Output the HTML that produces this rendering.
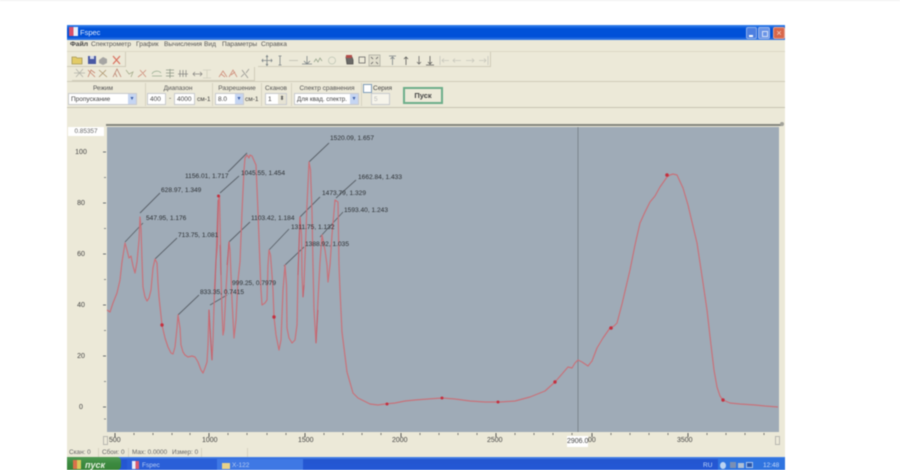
<!DOCTYPE html>
<html><head><meta charset="utf-8"><style>
html,body{margin:0;padding:0;background:#fff;width:900px;height:470px;overflow:hidden}
#root{position:relative;width:900px;height:470px;overflow:hidden;filter:blur(.6px);font-family:"Liberation Sans","Noto Sans CJK JP",sans-serif;color:#444;font-size:6.5px}
.a{position:absolute;white-space:nowrap}
.box{position:absolute;background:#fff;border:1px solid #c8cace;box-sizing:border-box;font-size:6.5px;line-height:10px;padding-left:2px;white-space:nowrap}
.dd{position:absolute;right:0;top:0;bottom:0;width:8px;background:#c5d5f2;color:#3a5ea8;font-size:6px;line-height:10px;text-align:center}
.sep{position:absolute;background:#d6d2c0;width:1px}
.lb{position:absolute;white-space:nowrap;font-size:6.5px;color:#555;transform:translateX(-50%)}
.ann{position:absolute;white-space:nowrap;font-size:6.6px;color:#2c3034}
.yl{position:absolute;left:70px;width:22px;text-align:center;font-size:7px;color:#444}
.xl{position:absolute;top:437px;font-size:7px;color:#444;white-space:nowrap}
.m{position:absolute;top:41px;font-size:6.6px;color:#555;white-space:nowrap}
.st{position:absolute;top:449px;font-size:6.4px;color:#666;white-space:nowrap}
</style></head><body><div id="root">
<div class="a" style="left:0;top:0;width:900px;height:1px;background:#f0f0f0"></div>
<!-- window -->
<div class="a" style="left:67px;top:25px;width:718px;height:433px;background:#ece9d8"></div>
<div class="a" style="left:67px;top:25px;width:718px;height:15px;background:linear-gradient(#3a84ec,#0052d8 25%,#0050d8 78%,#3d80e6)"></div>
<div class="a" style="left:69px;top:27px;width:9px;height:9px;background:linear-gradient(90deg,#d8506a 50%,#e8eef8 50%)"></div>
<div class="a" style="left:80px;top:28px;color:#dfe9fb;font-size:7.5px">Fspec</div>
<div class="a" style="left:746px;top:27px;width:11px;height:12px;background:#4d7fe0;border:1px solid #8fb0ea;box-sizing:border-box;border-radius:2px"><div style="position:absolute;left:2px;bottom:1px;width:4px;height:2px;background:#fff"></div></div>
<div class="a" style="left:758px;top:27px;width:12px;height:12px;background:#6a94e6;border:1px solid #9db7ea;box-sizing:border-box;border-radius:2px"><div style="position:absolute;left:3px;top:3px;width:4px;height:4px;border:1px solid #d6e2f8"></div></div>
<div class="a" style="left:773px;top:27px;width:12px;height:12px;background:#d9674a;border:1px solid #e4a090;box-sizing:border-box;border-radius:2px;color:#f4d4c8;font-size:9px;line-height:10px;text-align:center">×</div>
<!-- menu -->
<div class="a" style="left:70px;top:41px;font-size:6.8px;color:#444;font-weight:bold">Файл</div>
<div class="m" style="left:91px">Спектрометр</div>
<div class="m" style="left:136px">График</div>
<div class="m" style="left:164px">Вычисления</div>
<div class="m" style="left:204px">Вид</div>
<div class="m" style="left:222px">Параметры</div>
<div class="m" style="left:261px">Справка</div>
<div class="a" style="left:67px;top:51px;width:718px;height:1px;background:#dcd8c6"></div>
<!-- toolbars -->
<div class="a" style="left:67px;top:52px;width:58px;height:14px;border-right:1px solid #d0ccba;border-bottom:1px solid #d0ccba"></div>
<div class="a" style="left:258px;top:52px;width:232px;height:14px;border-right:1px solid #d0ccba;border-bottom:1px solid #d0ccba"></div>
<div class="a" style="left:72px;top:67px;width:182px;height:13px;border-right:1px solid #d0ccba;border-bottom:1px solid #d0ccba"></div>
<svg class="a" style="left:67px;top:52px;opacity:.85" width="430" height="30" viewBox="0 0 430 30" fill="none">
<path d="M5 5h4l1 1h5v6H5z" fill="#e2c654" stroke="#9a8a40" stroke-width=".8"/>
<rect x="21" y="4" width="8" height="8" fill="#2c3f9c"/><rect x="23" y="4" width="4" height="3" fill="#cfd6ee"/>
<path d="M32 8l4-3 4 2v4l-4 2-4-2z" fill="#9a9a9a"/>
<path d="M46 4l7 8M53 4l-7 8" stroke="#d6604e" stroke-width="1.300"/>
<g stroke="#69737a" stroke-width=".8">
<path d="M200 4v9M195.500 8.500h9M196 7l-1 1.500 1 1.500M204 7l1 1.500-1 1.500M199 5l1-1.500 1 1.500M199 12l1 1.500 1-1.500"/>
<path d="M213 4v9M211.500 4h3M211.500 13h3"/>
<path d="M222 8.500h9" stroke="#b8b8ac"/>
<path d="M240 4v8M235 12h10M237 9l3 3 3-3"/>
<path d="M247 10l2-3 2 3 2-4 2 3" stroke="#8a9a80"/>
<circle cx="265" cy="8.500" r="3.500" stroke="#b8c0b0"/>
<path d="M279 5h6l1 3v4h-6z" fill="#555" stroke="#333"/><rect x="279" y="3" width="6" height="3" fill="#a33" stroke="none"/>
<rect x="292" y="5" width="6" height="6" stroke="#555"/>
<rect x="302" y="3" width="11" height="11" fill="#dedbcb" stroke="#a4a49a"/>
<path d="M304 5l2 2M311 5l-2 2M304 12l2-2M311 12l-2-2" stroke="#444"/>
<path d="M322 4h7M325.500 5v8M323.500 7l2-2 2 2"/><path d="M339 5v8M337 7l2-2 2 2" stroke="#444"/>
<path d="M352 4v8M350 10l2 2 2-2" stroke="#555"/><path d="M363 4v8M359 13h8M361 10l2 2 2-2" stroke="#444"/>
<g stroke="#c2c2b8"><path d="M373 4v9M382 8.500h-7M377 6.500l-2 2 2 2"/><path d="M386 8.500h8M388 6.500l-2 2 2 2"/><path d="M399 8.500h8M405 6.500l2 2-2 2"/><path d="M412 8.500h7M417 6.500l2 2-2 2M421 4v9"/></g>
</g>
<g stroke-width=".8" opacity=".85">
<path d="M9 17l7 8M16 17l-7 8M7 21h11" stroke="#9e9f98"/>
<path d="M21 25l3-7 4 3M21 18l7 7" stroke="#b9604a"/>
<path d="M32 18l8 7M32 25l4-4 3-3" stroke="#947444"/>
<path d="M46 25l4-8 4 8M48 21l2 4" stroke="#a85844"/>
<path d="M59 18l3 4 4-2-2 5" stroke="#8a9670"/>
<path d="M73 18l6 7M79 18l-3 3M71 25l4-3" stroke="#c46c58"/>
<path d="M85 22a5 4 0 0 1 9-1M85 24h10" stroke="#7e9a7c"/>
<path d="M99 18h8M99 21h8M99 24h8M103 17v9" stroke="#6c7a6a"/>
<path d="M111 22h10M113 18v7M116 18v7M119 18v7" stroke="#666"/>
<path d="M126 22h9M128 20l-2 2 2 2M133 20l2 2-2 2" stroke="#666"/>
<path d="M135 18h8M139 18v8M135 26h8" stroke="#c6c6b6" transform="translate(1 0)"/>
<path d="M152 25l4-6 4 6M154 22l4 3" stroke="#c46c58"/>
<path d="M162 25l4-7 4 7M164 23l4-3" stroke="#c46c58"/>
<path d="M175 18l6 8M182 17l-3 4M174 25l3-3" stroke="#777"/>
</g></svg>
<!-- param band -->
<div class="a" style="left:67px;top:81px;width:718px;height:1px;background:#d0ccba"></div>
<div class="a" style="left:67px;top:107px;width:718px;height:1px;background:#c8c4b2"></div>
<div class="sep" style="left:145px;top:83px;height:23px"></div>
<div class="sep" style="left:212px;top:83px;height:23px"></div>
<div class="sep" style="left:261px;top:83px;height:23px"></div>
<div class="sep" style="left:291px;top:83px;height:23px"></div>
<div class="sep" style="left:361px;top:83px;height:23px"></div>
<div class="lb" style="left:103px;top:85px">Режим</div>
<div class="lb" style="left:178px;top:85px">Диапазон</div>
<div class="lb" style="left:237px;top:85px">Разрешение</div>
<div class="lb" style="left:276px;top:85px">Сканов</div>
<div class="lb" style="left:327px;top:85px">Спектр сравнения</div>
<div class="box" style="left:68px;top:93px;width:69px;height:12px;padding-top:1px">Пропускание<div class="dd">▾</div></div>
<div class="box" style="left:147px;top:93px;width:19px;height:12px;padding-top:1px">400</div>
<div class="a" style="left:169px;top:95px">-</div>
<div class="box" style="left:174px;top:93px;width:21px;height:12px;padding-top:1px">4000</div>
<div class="a" style="left:197px;top:96px">см-1</div>
<div class="box" style="left:215px;top:93px;width:29px;height:12px;padding-top:1px">8.0<div class="dd">▾</div></div>
<div class="a" style="left:245px;top:96px">см-1</div>
<div class="box" style="left:265px;top:93px;width:22px;height:12px;padding-top:1px">1<div class="dd" style="background:#e6e3d4;color:#555">⬍</div></div>
<div class="box" style="left:294px;top:93px;width:65px;height:12px;padding-top:1px;font-size:6.2px">Для квад. спектр.<div class="dd">▾</div></div>
<div class="a" style="left:363px;top:84px;width:7px;height:7px;background:#fff;border:1px solid #7f9db9"></div>
<div class="a" style="left:373px;top:85px">Серия</div>
<div class="box" style="left:371px;top:93px;width:19px;height:12px;background:#f6f4ea;color:#bbb;padding-top:1px">5</div>
<div class="a" style="left:403px;top:87px;width:40px;height:17px;box-sizing:border-box;background:#ece9d8;border:2px solid #6cae8a;text-align:center;font-size:7.5px;line-height:13px;font-weight:bold;color:#444">Пуск</div>
<!-- cursor value and slider -->
<div class="a" style="left:68px;top:127px;width:36px;height:9px;background:#fff;text-align:center;font-size:6.4px;line-height:9px;color:#666">0.85357</div>
<div class="a" style="left:106px;top:124px;width:677px;height:2px;background:#83857e"></div>
<div class="a" style="left:780px;top:122px;width:4px;height:4px;border-radius:50%;background:#a2a29a"></div>
<!-- plot -->
<svg class="a" style="left:0;top:0" width="900" height="470" viewBox="0 0 900 470" fill="none">
<rect x="107" y="127" width="672" height="305" fill="#9fabb7"/>
<path d="M578 127V432" stroke="#7c858d" stroke-width="1"/>
<g stroke="#6a7074" stroke-width=".8">
<path d="M103 152h3M103 203h3M103 254h3M103 305h3M103 356h3M103 407h3" stroke-width="1"/>
<path d="M104 177.500h2M104 228.500h2M104 279.500h2M104 330.500h2M104 381.500h2M104 419h2"/>
</g>
<g stroke="#555" stroke-width=".8">
<path d="M115 433v4M209 433v4M305 433v4M401 433v4M496 433v4M592 433v4M688 433v4" stroke-width="1"/>
<path d="M134 433v2M153 433v2M172 433v2M190 433v2M228 433v2M247 433v2M267 433v2M286 433v2M324 433v2M343 433v2M362 433v2M381 433v2M420 433v2M439 433v2M458 433v2M477 433v2M515 433v2M534 433v2M553 433v2M572 433v2M611 433v2M630 433v2M649 433v2M668 433v2M707 433v2M726 433v2M745 433v2M764 433v2"/>
</g>
<g stroke="#596068" stroke-width=".9">
<path d="M125 242L143 223M140 213L160 193M155 259L177 238M178 315L199 295M210 305L227 295M229 242L250 222M220 193L239 176M228 172L247 153M269 250L289 229M284 266L304 247M300 217L320 197M309 162L329 143M320 237L343 212M336 198L356 180"/>
</g>
<path id="c" stroke="#c8727a" stroke-width="1.200" stroke-linejoin="round" d="M107 310L110 312L113 303L117 293L120 280L122 262L125 243L127 250L129 258L131 256L133 266L135 273L137 262L139 240L140 217L141 228L142 260L143 287L145 297L147 301L149 298L151 290L153 268L155 259L157 263L158 283L159 297L162 325L165 338L168 347L171 353L173 354L175 347L177 328L178 315L180 328L181 345L183 352L185 355L188 357L192 356L195 357L198 362L201 370L203 373L205 368L207 362L208 345L209 310L210 330L211 345L212 360L213 340L214.500 290L216 260L217.500 245L218.500 200L219.500 196L220.500 245L221 275L222 310L223 335L224 330L226 290L227.500 265L229 242L230 250L231 275L232 300L234 338L236 320L238 280L240 262L242 212L244 170L245 158L247 155L249 158L250 155L252 156L256 165L258 212L260 265L261 290L262 305L265 303L267 300L268 265L269 250L270.500 255L272 275L273 290L274 317L276 335L279 350L281 340L283 290L285 265L286.500 285L287 328L289 338L292 343L295 340L297 325L298 275L300 217L301.500 235L302 275L303 297L304 285L305 258L307 205L309 162L310.500 170L312 212L313 265L314 310L316 343L318 300L320 262L322 235L325 250L327 265L328 282L330 265L332 235L335 200L338 202L339 265L340 290L342 332L347 372L353 393L358 398L364 401L370 404L378 405L385 404L395 403L405 401L415 400L428 399L442 398L455 399L470 401L485 402L500 402L515 401L530 397L545 391L555 382L562 374L568 367L572 368L575 363L578 360L582 362L588 366L592 361L597 348L603 338L610 328L614 326L617 323L622 304L630 270L635 245L640 223L645 212L650 202L655 196L660 187L667 177L670 175L673 174L677 175L683 188L688 205L692 222L697 243L702 276L707 310L711 345L714 370L717 387L720 396L723 400L730 403L740 404L755 405L765 406L778 407"/>
<path stroke="#c05a66" stroke-width=".9" opacity=".8" d="M209 310L212 360M215 290L218 200M220 245L221 275M298 275L300 217M303 297L304 285M227 265L229 242M316 343L318 310"/>
<g fill="#c4303f">
<circle cx="162" cy="325" r="1.700"/><circle cx="274" cy="317" r="1.700"/><circle cx="218.500" cy="196" r="1.500"/><circle cx="387" cy="404" r="1.500"/><circle cx="442" cy="398" r="1.500"/><circle cx="498" cy="402" r="1.500"/><circle cx="555" cy="382" r="1.700"/><circle cx="611" cy="328" r="1.800"/><circle cx="667" cy="175" r="1.800"/><circle cx="723" cy="400" r="1.700"/>
</g>
</svg>
<div class="yl" style="top:149px">100</div>
<div class="yl" style="top:200px">80</div>
<div class="yl" style="top:251px">60</div>
<div class="yl" style="top:302px">40</div>
<div class="yl" style="top:353px">20</div>
<div class="yl" style="top:404px">0</div>
<div class="ann" style="left:161px;top:187px">628.97, 1.349</div>
<div class="ann" style="left:146px;top:215px">547.95, 1.176</div>
<div class="ann" style="left:178px;top:232px">713.75, 1.081</div>
<div class="ann" style="left:200px;top:289px">833.35, 0.7415</div>
<div class="ann" style="left:232px;top:280px">999.25, 0.7979</div>
<div class="ann" style="left:185px;top:173px">1156.01, 1.717</div>
<div class="ann" style="left:241px;top:170px">1045.55, 1.454</div>
<div class="ann" style="left:251px;top:215px">1103.42, 1.184</div>
<div class="ann" style="left:291px;top:224px">1311.75, 1.132</div>
<div class="ann" style="left:305px;top:241px">1388.92, 1.035</div>
<div class="ann" style="left:322px;top:190px">1473.79, 1.329</div>
<div class="ann" style="left:330px;top:135px">1520.09, 1.657</div>
<div class="ann" style="left:344px;top:207px">1593.40, 1.243</div>
<div class="ann" style="left:358px;top:174px">1662.84, 1.433</div>
<!-- x axis -->
<div class="a" style="left:103px;top:436px;width:5px;height:9px;border:1px solid #b8b8b0;box-sizing:border-box"></div>
<div class="a" style="left:775px;top:436px;width:5px;height:9px;border:1px solid #b8b8b0;box-sizing:border-box"></div>
<div class="xl" style="left:109px">500</div>
<div class="xl" style="left:202px">1000</div>
<div class="xl" style="left:298px">1500</div>
<div class="xl" style="left:392px">2000</div>
<div class="xl" style="left:487px">2500</div>
<div class="xl" style="left:588px">00</div>
<div class="a" style="left:567px;top:436px;width:21px;height:11px;background:#fff;font-size:7px;line-height:11px;text-align:center">2906.0</div>
<div class="xl" style="left:677px">3500</div>
<!-- status -->
<div class="st" style="left:69px">Скан: 0</div>
<div class="st" style="left:102px">Сбои: 0</div>
<div class="st" style="left:132px">Max: 0.0000</div>
<div class="st" style="left:172px">Измер: 0</div>
<div class="sep" style="left:98px;top:448px;height:9px"></div>
<div class="sep" style="left:128px;top:448px;height:9px"></div>
<div class="sep" style="left:201px;top:448px;height:9px"></div>
<div class="sep" style="left:247px;top:448px;height:9px"></div>
<!-- taskbar -->
<div class="a" style="left:67px;top:457px;width:718px;height:13px;background:linear-gradient(#4a88ea,#2456d0 22%,#2458d6)"></div>
<div class="a" style="left:67px;top:457px;width:54px;height:13px;background:linear-gradient(#4f9a52,#3c8a40 50%,#388438);border-radius:0 4px 4px 0"></div>
<div class="a" style="left:73px;top:460px;width:8px;height:9px;background:linear-gradient(90deg,#d9714a 50%,#d8c85a 50%)"></div>
<div class="a" style="left:85px;top:460px;font-size:9px;font-weight:bold;font-style:italic;color:#e6f0e0">пуск</div>
<div class="a" style="left:127px;top:459px;width:90px;height:11px;background:#2a5fd8"></div>
<div class="a" style="left:132px;top:461px;width:7px;height:8px;background:linear-gradient(90deg,#e8eef8 50%,#d85a70 50%)"></div>
<div class="a" style="left:142px;top:462px;font-size:6.5px;color:#b8cdf2">Fspec</div>
<div class="a" style="left:217px;top:459px;width:86px;height:11px;background:#3f78e4"></div>
<div class="a" style="left:222px;top:463px;width:8px;height:6px;background:#e8d28a"></div>
<div class="a" style="left:232px;top:462px;font-size:6.5px;color:#b8cdf2">Х-122</div>
<div class="a" style="left:703px;top:462px;font-size:6.5px;color:#c4d6f6">RU</div>
<div class="a" style="left:718px;top:458px;width:67px;height:12px;background:#2f74e0"></div>
<div class="a" style="left:720px;top:462px;width:6px;height:7px;border-radius:50%;background:#bcd4f2"></div>
<div class="a" style="left:730px;top:462px;width:6px;height:6px;background:#7a8fb4"></div>
<div class="a" style="left:738px;top:463px;width:6px;height:5px;background:#b0c0d4"></div>
<div class="a" style="left:746px;top:462px;width:7px;height:6px;background:#2c57a8;border:1px solid #a8c4ee;box-sizing:border-box"></div>
<div class="a" style="left:763px;top:462px;font-size:6.5px;color:#c8daf8">12:48</div>
</div></body></html>
